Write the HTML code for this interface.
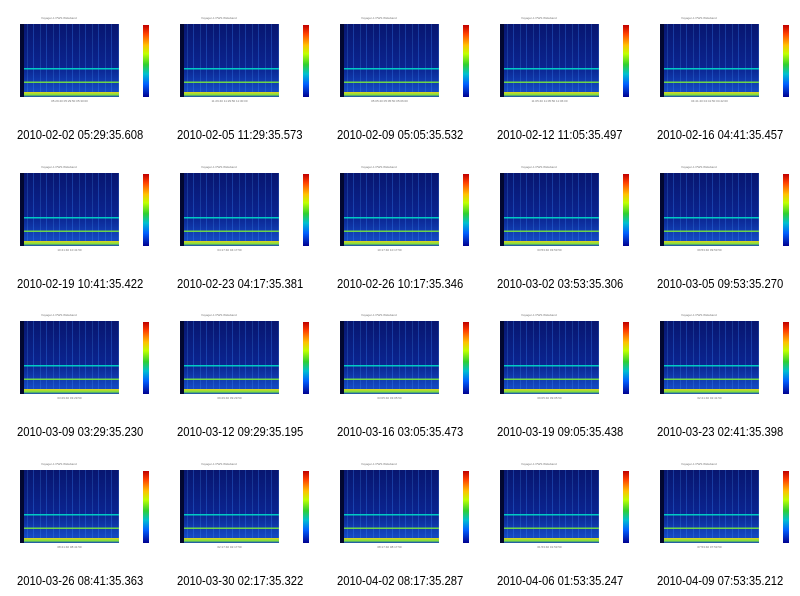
<!DOCTYPE html><html><head><style>
body{margin:0;width:800px;height:596px;background:#fff;position:relative;overflow:hidden;font-family:"Liberation Sans",sans-serif}
.c{position:absolute;width:160px;height:148px}
.t{position:absolute;left:41px;top:16px;font-size:3px;color:#777}
.p{position:absolute;left:20px;top:24px;width:99px;height:73px;
background:
linear-gradient(to bottom,transparent 60%,rgba(0,220,200,.9) 60%,rgba(0,220,200,.9) 62%,transparent 62%,transparent 79%,rgba(120,230,60,.9) 79%,rgba(120,230,60,.9) 81%,transparent 81%,transparent 93%,#e8d020 93%,#7ce040 97%,#0a3cc0 100%),
repeating-linear-gradient(90deg,rgba(60,140,255,.3) 0 1px,transparent 1px 7px,rgba(80,170,255,.2) 7px 8px,transparent 8px 13px),
linear-gradient(to bottom,#081670,#0a2490 60%,#1448c0 90%)}
.p::before{content:"";position:absolute;left:0;top:0;width:4px;height:100%;background:#020830}
.ax{position:absolute;left:20px;top:99px;width:99px;font-size:3px;color:#777;text-align:center}
.cb{position:absolute;left:143px;top:25px;width:6px;height:72px;background:linear-gradient(to bottom,#c00000,#ff4000 12%,#ffc000 28%,#c0ff00 40%,#30d030 55%,#00c0d0 68%,#0060ff 82%,#000090)}
.cap{position:absolute;left:17px;top:127px;font-size:13px;color:#000;white-space:nowrap;transform:scaleX(.865);transform-origin:0 0}
</style></head><body>
<div class="c" style="left:0;top:0"><div class="t">Voyager-1 PWS Wideband</div><div class="p"></div><div class="ax">05:29:40 05:29:50 05:30:00</div><div class="cb"></div><div class="cap">2010-02-02 05:29:35.608</div></div>
<div class="c" style="left:160px;top:0"><div class="t">Voyager-1 PWS Wideband</div><div class="p"></div><div class="ax">11:29:40 11:29:50 11:30:00</div><div class="cb"></div><div class="cap">2010-02-05 11:29:35.573</div></div>
<div class="c" style="left:320px;top:0"><div class="t">Voyager-1 PWS Wideband</div><div class="p"></div><div class="ax">05:05:40 05:05:50 05:06:00</div><div class="cb"></div><div class="cap">2010-02-09 05:05:35.532</div></div>
<div class="c" style="left:480px;top:0"><div class="t">Voyager-1 PWS Wideband</div><div class="p"></div><div class="ax">11:05:40 11:05:50 11:06:00</div><div class="cb"></div><div class="cap">2010-02-12 11:05:35.497</div></div>
<div class="c" style="left:640px;top:0"><div class="t">Voyager-1 PWS Wideband</div><div class="p"></div><div class="ax">04:41:40 04:41:50 04:42:00</div><div class="cb"></div><div class="cap">2010-02-16 04:41:35.457</div></div>

<div class="c" style="left:0;top:149px"><div class="t">Voyager-1 PWS Wideband</div><div class="p"></div><div class="ax">10:41:40 10:41:50</div><div class="cb"></div><div class="cap">2010-02-19 10:41:35.422</div></div>
<div class="c" style="left:160px;top:149px"><div class="t">Voyager-1 PWS Wideband</div><div class="p"></div><div class="ax">04:17:40 04:17:50</div><div class="cb"></div><div class="cap">2010-02-23 04:17:35.381</div></div>
<div class="c" style="left:320px;top:149px"><div class="t">Voyager-1 PWS Wideband</div><div class="p"></div><div class="ax">10:17:40 10:17:50</div><div class="cb"></div><div class="cap">2010-02-26 10:17:35.346</div></div>
<div class="c" style="left:480px;top:149px"><div class="t">Voyager-1 PWS Wideband</div><div class="p"></div><div class="ax">03:53:40 03:53:50</div><div class="cb"></div><div class="cap">2010-03-02 03:53:35.306</div></div>
<div class="c" style="left:640px;top:149px"><div class="t">Voyager-1 PWS Wideband</div><div class="p"></div><div class="ax">09:53:40 09:53:50</div><div class="cb"></div><div class="cap">2010-03-05 09:53:35.270</div></div>

<div class="c" style="left:0;top:297px"><div class="t">Voyager-1 PWS Wideband</div><div class="p"></div><div class="ax">03:29:40 03:29:50</div><div class="cb"></div><div class="cap">2010-03-09 03:29:35.230</div></div>
<div class="c" style="left:160px;top:297px"><div class="t">Voyager-1 PWS Wideband</div><div class="p"></div><div class="ax">09:29:40 09:29:50</div><div class="cb"></div><div class="cap">2010-03-12 09:29:35.195</div></div>
<div class="c" style="left:320px;top:297px"><div class="t">Voyager-1 PWS Wideband</div><div class="p"></div><div class="ax">03:05:40 03:05:50</div><div class="cb"></div><div class="cap">2010-03-16 03:05:35.473</div></div>
<div class="c" style="left:480px;top:297px"><div class="t">Voyager-1 PWS Wideband</div><div class="p"></div><div class="ax">09:05:40 09:05:50</div><div class="cb"></div><div class="cap">2010-03-19 09:05:35.438</div></div>
<div class="c" style="left:640px;top:297px"><div class="t">Voyager-1 PWS Wideband</div><div class="p"></div><div class="ax">02:41:40 02:41:50</div><div class="cb"></div><div class="cap">2010-03-23 02:41:35.398</div></div>

<div class="c" style="left:0;top:446px"><div class="t">Voyager-1 PWS Wideband</div><div class="p"></div><div class="ax">08:41:40 08:41:50</div><div class="cb"></div><div class="cap">2010-03-26 08:41:35.363</div></div>
<div class="c" style="left:160px;top:446px"><div class="t">Voyager-1 PWS Wideband</div><div class="p"></div><div class="ax">02:17:40 02:17:50</div><div class="cb"></div><div class="cap">2010-03-30 02:17:35.322</div></div>
<div class="c" style="left:320px;top:446px"><div class="t">Voyager-1 PWS Wideband</div><div class="p"></div><div class="ax">08:17:40 08:17:50</div><div class="cb"></div><div class="cap">2010-04-02 08:17:35.287</div></div>
<div class="c" style="left:480px;top:446px"><div class="t">Voyager-1 PWS Wideband</div><div class="p"></div><div class="ax">01:53:40 01:53:50</div><div class="cb"></div><div class="cap">2010-04-06 01:53:35.247</div></div>
<div class="c" style="left:640px;top:446px"><div class="t">Voyager-1 PWS Wideband</div><div class="p"></div><div class="ax">07:53:40 07:53:50</div><div class="cb"></div><div class="cap">2010-04-09 07:53:35.212</div></div>
</body></html>
